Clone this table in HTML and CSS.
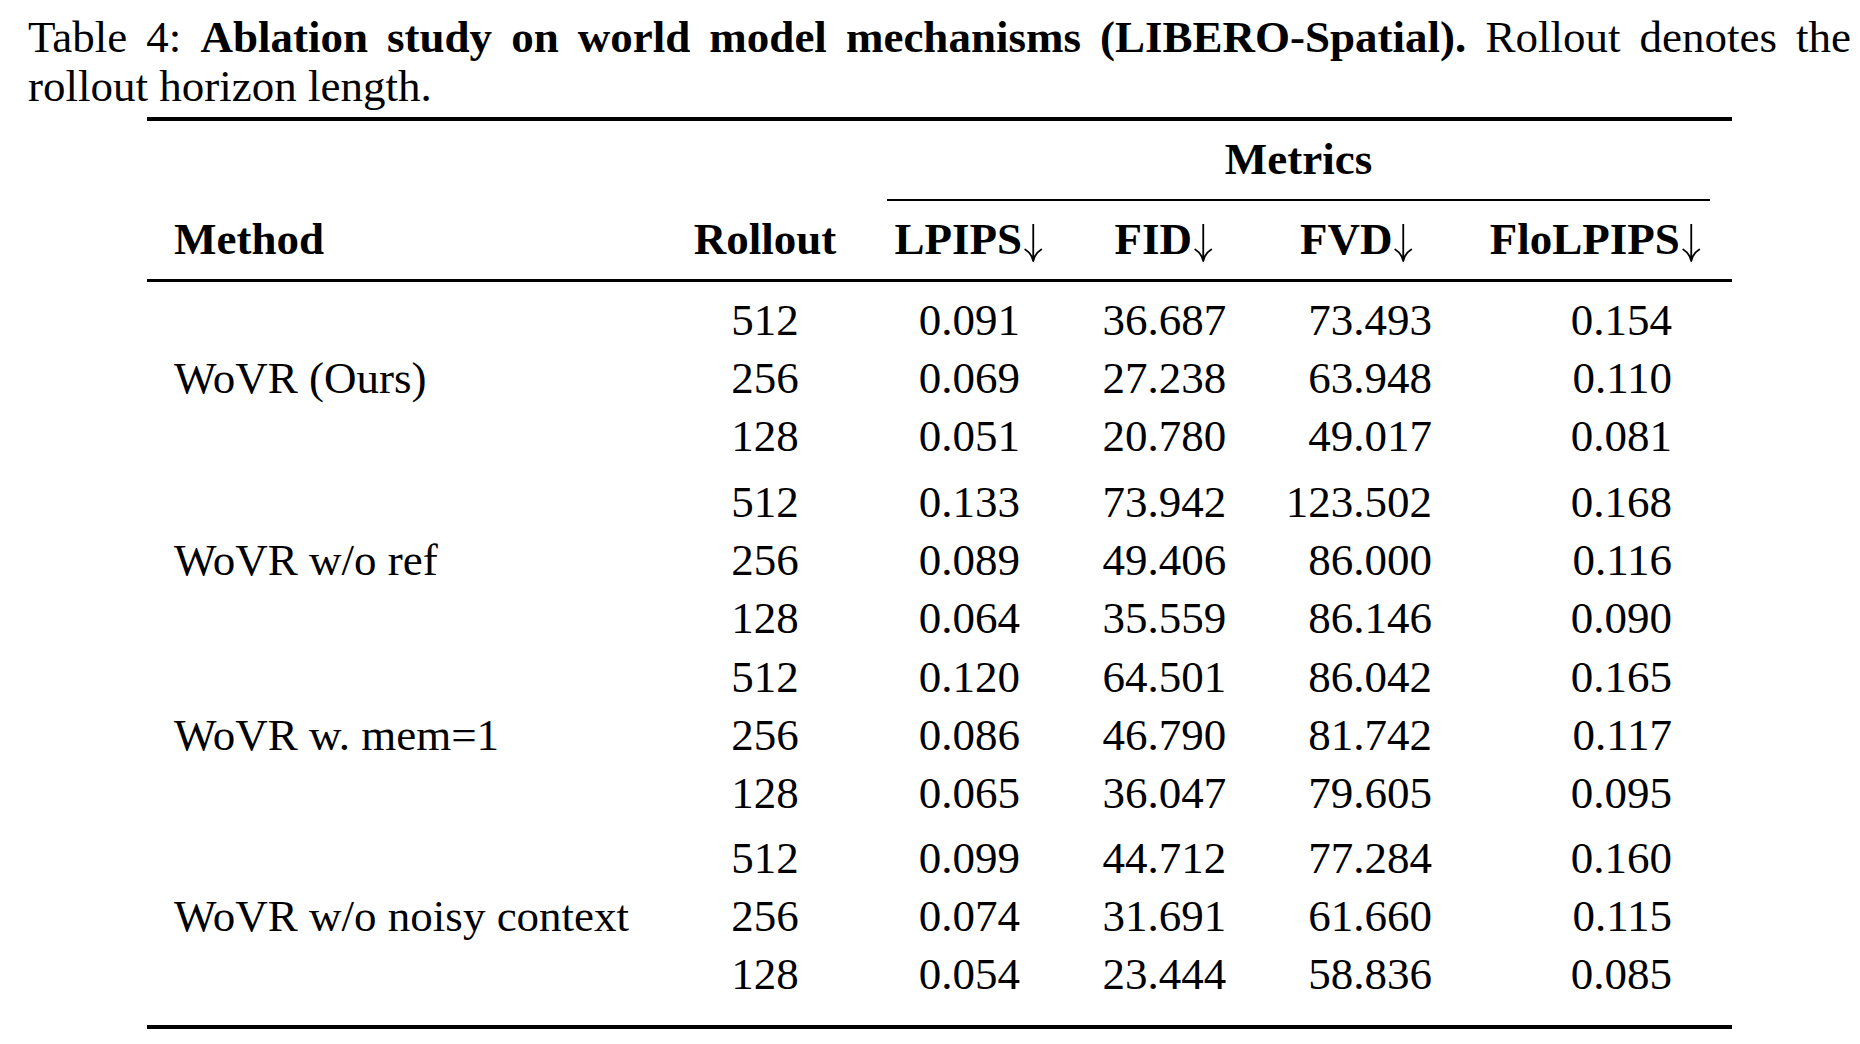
FILE: index.html
```html
<!DOCTYPE html>
<html lang="en">
<head>
<meta charset="utf-8">
<title>Table 4</title>
<link rel="stylesheet" href="styles.css">
</head>
<body>
<div class="page">
  <p class="caption"><span class="label">Table 4:</span> <b>Ablation study on world model mechanisms (LIBERO-Spatial).</b> <span>Rollout denotes the</span> <span>rollout horizon length.</span></p>
  <table class="results">
    <colgroup>
      <col class="c-method">
      <col class="c-rollout">
      <col class="c-lpips">
      <col class="c-fid">
      <col class="c-fvd">
      <col class="c-flo">
    </colgroup>
    <thead>
      <tr class="group-head">
        <th></th>
        <th></th>
        <th colspan="4" class="span-head"><div class="cmid">Metrics</div></th>
      </tr>
      <tr class="col-head">
        <th class="method">Method</th>
        <th>Rollout</th>
        <th>LPIPS<svg class="arrow" viewBox="0 0 22 38" aria-label="lower is better"><path d="M11 0V37M3 25.5C7 28 10 32 11 37C12 32 15 28 19 25.5"/></svg></th>
        <th>FID<svg class="arrow" viewBox="0 0 22 38" aria-label="lower is better"><path d="M11 0V37M3 25.5C7 28 10 32 11 37C12 32 15 28 19 25.5"/></svg></th>
        <th>FVD<svg class="arrow" viewBox="0 0 22 38" aria-label="lower is better"><path d="M11 0V37M3 25.5C7 28 10 32 11 37C12 32 15 28 19 25.5"/></svg></th>
        <th>FloLPIPS<svg class="arrow" viewBox="0 0 22 38" aria-label="lower is better"><path d="M11 0V37M3 25.5C7 28 10 32 11 37C12 32 15 28 19 25.5"/></svg></th>
      </tr>
    </thead>
    <tbody class="group gap-top">
      <tr><td class="method"></td><td>512</td><td>0.091</td><td>36.687</td><td class="fvd">73.493</td><td class="flo">0.154</td></tr>
      <tr><td class="method">WoVR (Ours)</td><td>256</td><td>0.069</td><td>27.238</td><td class="fvd">63.948</td><td class="flo">0.110</td></tr>
      <tr><td class="method"></td><td>128</td><td>0.051</td><td>20.780</td><td class="fvd">49.017</td><td class="flo">0.081</td></tr>
    </tbody>
    <tbody class="group gap-lg">
      <tr><td class="method"></td><td>512</td><td>0.133</td><td>73.942</td><td class="fvd">123.502</td><td class="flo">0.168</td></tr>
      <tr><td class="method">WoVR w/o ref</td><td>256</td><td>0.089</td><td>49.406</td><td class="fvd">86.000</td><td class="flo">0.116</td></tr>
      <tr><td class="method"></td><td>128</td><td>0.064</td><td>35.559</td><td class="fvd">86.146</td><td class="flo">0.090</td></tr>
    </tbody>
    <tbody class="group gap-sm">
      <tr><td class="method"></td><td>512</td><td>0.120</td><td>64.501</td><td class="fvd">86.042</td><td class="flo">0.165</td></tr>
      <tr><td class="method">WoVR w. mem=1</td><td>256</td><td>0.086</td><td>46.790</td><td class="fvd">81.742</td><td class="flo">0.117</td></tr>
      <tr><td class="method"></td><td>128</td><td>0.065</td><td>36.047</td><td class="fvd">79.605</td><td class="flo">0.095</td></tr>
    </tbody>
    <tbody class="group gap-md last">
      <tr><td class="method"></td><td>512</td><td>0.099</td><td>44.712</td><td class="fvd">77.284</td><td class="flo">0.160</td></tr>
      <tr><td class="method">WoVR w/o noisy context</td><td>256</td><td>0.074</td><td>31.691</td><td class="fvd">61.660</td><td class="flo">0.115</td></tr>
      <tr><td class="method"></td><td>128</td><td>0.054</td><td>23.444</td><td class="fvd">58.836</td><td class="flo">0.085</td></tr>
    </tbody>
  </table>
</div>
</body>
</html>
```
FILE: styles.css
```css
html, body {
  margin: 0;
  padding: 0;
  background: #ffffff;
}

body {
  color: #000000;
  font-family: "Liberation Serif", "Times New Roman", serif;
  font-size: 45px;
}

.page {
  width: 1823px;
  padding: 13px 0 0 28px;
}

.caption {
  margin: 0 0 6px;
  line-height: 49px;
  text-align: justify;
}

.caption b {
  font-weight: bold;
}

.results {
  width: 1585px;
  margin: 0 auto;
  table-layout: fixed;
  border-collapse: separate;
  border-spacing: 0;
  border-top: 4px solid #000;
  border-bottom: 4px solid #000;
}

.c-method { width: 518px; }
.c-rollout { width: 200px; }
.c-lpips { width: 209px; }
.c-fid { width: 181px; }
.c-fvd { width: 205px; }
.c-flo { width: 272px; }

th {
  font-weight: bold;
  text-align: center;
  line-height: 49px;
  padding: 0;
  white-space: nowrap;
}

.group-head th {
  vertical-align: bottom;
}

.span-head {
  padding: 0 22.5px;
}

.cmid {
  padding: 14px 0 15px;
  border-bottom: 2px solid #000;
}

.col-head th {
  padding: 14px 0 15px;
  border-bottom: 3px solid #000;
  vertical-align: baseline;
}

.col-head th.method {
  text-align: left;
  padding-left: 27px;
}

.arrow {
  display: inline-block;
  width: 22.5px;
  height: 38px;
  vertical-align: -8px;
  fill: none;
  stroke: #000;
  stroke-width: 1.8;
  stroke-linecap: round;
}

td {
  padding: 0;
  line-height: 58px;
  text-align: center;
  white-space: nowrap;
  vertical-align: baseline;
}

td.method {
  text-align: left;
  padding-left: 27px;
}

td.fvd {
  text-align: right;
  padding-right: 28px;
}

td.flo {
  text-align: right;
  padding-right: 60px;
}

.gap-top tr:first-child td { padding-top: 9px; }
.gap-lg tr:first-child td { padding-top: 8px; }
.gap-sm tr:first-child td { padding-top: 1px; }
.gap-md tr:first-child td { padding-top: 7px; }
.last tr:last-child td { padding-bottom: 22px; }
```
